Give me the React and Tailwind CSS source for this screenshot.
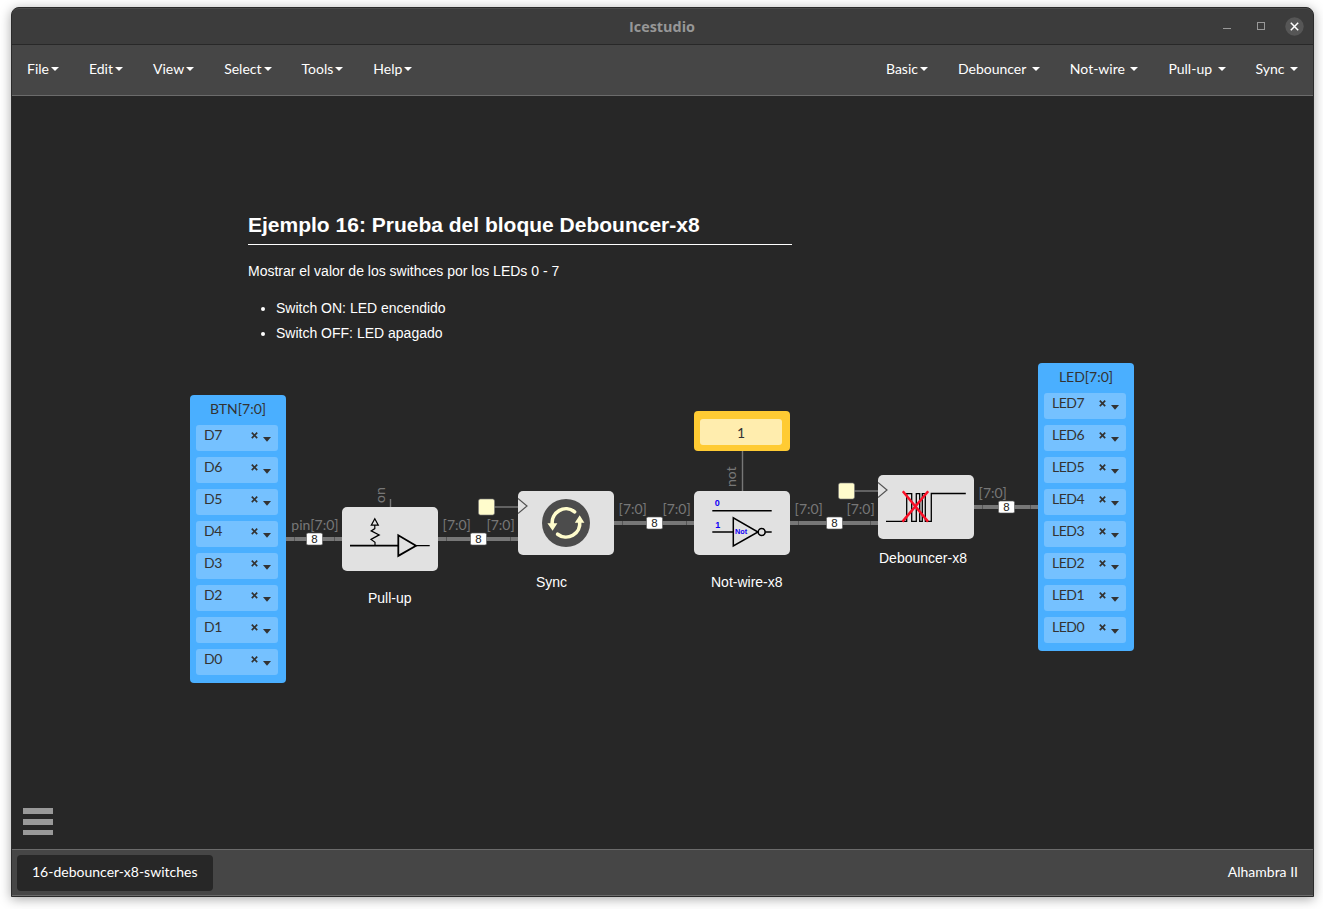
import React from "react";

const leftMenus = ["File", "Edit", "View", "Select", "Tools", "Help"];
const rightMenus = ["Basic", "Debouncer", "Not-wire", "Pull-up", "Sync"];

function Caret() {
  return <span className="mt-px h-0 w-0 border-x-4 border-t-4 border-x-transparent border-t-white" />;
}

function TitleBar() {
  return (
    <div className="grid h-[37px] grid-cols-[1fr_auto_1fr] items-center rounded-t-[7px] border-t border-b border-t-[#4b4b4b] border-b-[#282828] bg-[#3c3c3c]">
      <span />
      <span className="pr-px font-['Open_Sans',sans-serif] text-[14.4px] leading-5 font-bold text-[#979797]">Icestudio</span>
      <div className="flex items-center justify-end pr-[9px] pb-px">
        <svg width="8" height="8" className="mr-[26px]">
          <path d="M0 6.5H8" stroke="#999" />
        </svg>
        <svg width="8" height="8" className="mr-[20px]">
          <rect x=".5" y=".5" width="7" height="7" fill="none" stroke="#999" />
        </svg>
        <svg width="19" height="19">
          <circle cx="9.5" cy="9.5" r="9.2" fill="#565656" />
          <path d="M5.8 5.8l7.4 7.4M13.2 5.8l-7.4 7.4" stroke="#fff" strokeWidth="1.5" />
        </svg>
      </div>
    </div>
  );
}

function MenuBar() {
  return (
    <nav className="flex h-[51px] items-center justify-between border-b border-[#6b6b6b] bg-[#464646] px-[15px] pb-[3px] text-[14px] leading-5 text-white">
      <div className="flex gap-[30px]">
        {leftMenus.map((m) => (
          <button key={m} className="flex items-center gap-[2px]">
            {m}
            <Caret />
          </button>
        ))}
      </div>
      <div className="flex gap-[30px]">
        {rightMenus.map((m, i) => (
          <button key={m} className={i === 0 ? "flex items-center gap-[2px]" : "flex items-center gap-[5.5px]"}>
            {m}
            <Caret />
          </button>
        ))}
      </div>
    </nav>
  );
}

function IoBlock({ title, pins, className }) {
  return (
    <div className={"absolute flex h-72 w-24 flex-col rounded-[4px] bg-[#4aafff] pl-1.5 text-[14px] text-[#333] " + className}>
      <div className="flex h-[30px] justify-center pr-1.5 leading-7">{title}</div>
      <div className="flex flex-col gap-1.5">
        {pins.map((p) => (
          <div key={p} className="flex h-[26px] w-[82px] rounded-[3px] bg-[#75c1ff] pl-2">
            <span className="flex-1 leading-[19px] tracking-[-0.5px]">{p}</span>
            <svg width="27" height="26" viewBox="0 0 27 26">
              <path d="M.8 7.7l5.4 5.4M6.2 7.7l-5.4 5.4" stroke="#333" strokeWidth="1.7" />
              <path d="M12 12h8l-4 4.8z" fill="#333" />
            </svg>
          </div>
        ))}
      </div>
    </div>
  );
}

function Bus({ x1, x2, y, notches }) {
  return (
    <g>
      <rect x={x1} y={y - 2} width={x2 - x1} height="4" fill="#777" />
      {notches.map((n) => (
        <rect key={n} x={n} y={y - 2} width="1" height="4" fill="#555" />
      ))}
    </g>
  );
}

function Width({ x, y }) {
  return (
    <g>
      <rect x={x - 8} y={y - 6} width="16" height="12" rx="1.5" fill="#fff" stroke="#555" strokeWidth=".6" />
      <text x={x} y={y + 4} textAnchor="middle" fontSize="11.5" fill="#222" fontFamily="Liberation Sans, sans-serif">8</text>
    </g>
  );
}

function Wires() {
  return (
    <svg className="absolute inset-0" width="1302" height="753" viewBox="12 96 1302 753">
      <Bus x1={286} x2={342} y={539} notches={[294, 334]} />
      <Bus x1={438} x2={518} y={539} notches={[446, 510]} />
      <Bus x1={614} x2={694} y={523} notches={[622, 686]} />
      <Bus x1={790} x2={878} y={523} notches={[798, 870]} />
      <Bus x1={974} x2={1038} y={507} notches={[982, 1030]} />
      <g stroke="#777" strokeWidth="1.4">
        <path d="M494 507H518M854 491H878M742.5 451V491M390.5 499V507" />
      </g>
      <g fill="#777" fontSize="14" fontFamily="Lato, sans-serif">
        <text x="291.3" y="530">pin[7:0]</text>
        <text x="442.6" y="530">[7:0]</text>
        <text x="486.4" y="530">[7:0]</text>
        <text x="618.6" y="514">[7:0]</text>
        <text x="662.4" y="514">[7:0]</text>
        <text x="794.6" y="514">[7:0]</text>
        <text x="846.4" y="514">[7:0]</text>
        <text x="978.6" y="498">[7:0]</text>
        <text transform="translate(385 503) rotate(-90)">on</text>
        <text transform="translate(736 487) rotate(-90)">not</text>
      </g>
      <Width x={314.5} y={539} />
      <Width x={478.5} y={539} />
      <Width x={654.5} y={523} />
      <Width x={834.5} y={523} />
      <Width x={1006.5} y={507} />
      <g fill="#fffccc" stroke="#777" strokeWidth=".6">
        <rect x="478.5" y="499" width="16" height="16" rx="2" />
        <rect x="838.5" y="483" width="16" height="16" rx="2" />
      </g>
    </svg>
  );
}

function Block({ className, children }) {
  return <div className={"absolute h-16 w-24 overflow-hidden rounded-[5px] bg-[#e1e1e1] " + className}>{children}</div>;
}

function Label({ className, children }) {
  return <div className={"absolute font-['Liberation_Sans',Arial,sans-serif] text-[14px] leading-5 whitespace-nowrap text-white " + className}>{children}</div>;
}

function Canvas() {
  return (
    <main className="relative h-[753px] overflow-hidden bg-[#272727]">
      <section className="absolute top-[114px] left-[236px] w-[544px] font-['Liberation_Sans',Arial,sans-serif] text-[14px] leading-[25px] text-white">
        <h1 className="h-[35px] border-b border-white text-[21px] leading-[30px] font-bold">Ejemplo 16: Prueba del bloque Debouncer-x8</h1>
        <p className="mt-[14px]">Mostrar el valor de los swithces por los LEDs 0 - 7</p>
        <ul className="mt-3 list-disc pl-7">
          <li>Switch ON: LED encendido</li>
          <li>Switch OFF: LED apagado</li>
        </ul>
      </section>

      <Wires />

      <IoBlock className="top-[299px] left-[178px]" title="BTN[7:0]" pins={["D7", "D6", "D5", "D4", "D3", "D2", "D1", "D0"]} />

      <Block className="top-[411px] left-[330px]">
        <svg width="96" height="64" viewBox="342 507 96 64" fill="none" stroke="#000">
          <path d="M350 545.7H398" strokeWidth="1.8" />
          <path d="M416 545.7H429.7" strokeWidth="1.2" />
          <path d="M398.3 535.3V555.9L416 545.7Z" strokeWidth="1.8" />
          <path d="M375 545.5V542.2L371 539.4L379.2 534.9L371.2 530.9L374.8 528.6V525.2M374.8 518.8L371.3 525.2H378.3Z" strokeWidth="1.2" />
        </svg>
      </Block>
      <Label className="top-[492px] left-[356px]">Pull-up</Label>

      <Block className="top-[395px] left-[506px]">
        <svg width="96" height="64" viewBox="518 491 96 64" fill="none">
          <path d="M518 498.5L527 506L518 513.5" stroke="#555" strokeWidth="1.2" />
          <circle cx="566" cy="523" r="24" fill="#4c4c4c" />
          <g stroke="#fffccc" strokeWidth="3.6">
            <path d="M574.6 511.8A13.8 13.8 0 0 0 552.3 524.5" strokeLinecap="round" />
            <path d="M557.6 534.2A13.8 13.8 0 0 0 579.7 521.5" strokeLinecap="round" />
          </g>
          <path d="M547.4 523.2H557.4L552.6 530.8ZM574.8 522.8H584.4L579.7 515.3Z" fill="#fffccc" />
        </svg>
      </Block>
      <Label className="top-[476px] left-[524px]">Sync</Label>

      <div className="absolute top-[315px] left-[682px] h-10 w-24 rounded-[4px] bg-[#ffcb33] pt-2 pl-1.5">
        <div className="h-[26px] w-[82px] rounded-[3px] bg-[#ffedae] text-center text-[14px] leading-[27px] text-[#333]">1</div>
      </div>

      <Block className="top-[395px] left-[682px]">
        <svg width="96" height="64" viewBox="694 491 96 64" fill="none" stroke="#000" strokeWidth="1.5">
          <path d="M712.3 510.7H771.7M712.3 532H733M765.3 532H771.7" />
          <path d="M733.3 517.8V546L758 532Z" />
          <circle cx="761.7" cy="532" r="3.5" />
          <g fill="#1000f5" stroke="none" fontFamily="Liberation Sans, sans-serif" fontWeight="bold">
            <text x="714.8" y="506" fontSize="9">0</text>
            <text x="715.2" y="528" fontSize="9">1</text>
            <text x="735" y="534" fontSize="7.3">Not</text>
          </g>
        </svg>
      </Block>
      <Label className="top-[476px] left-[699px]">Not-wire-x8</Label>

      <Block className="top-[379px] left-[866px]">
        <svg width="96" height="64" viewBox="878 475 96 64" fill="none">
          <path d="M878 482.5L887 490L878 497.5" stroke="#555" strokeWidth="1.2" />
          <path d="M886 521.3H906.7V493.7H911.7V521.3H916.3V493.7H919.7V521.3H922.3V493.7H925.3V521.3H931.3V493.5H965.8" stroke="#000" strokeWidth="1.3" />
          <path d="M902.8 491.2L928 521.6M928.2 491.2L902.5 521.6" stroke="#fa1027" strokeWidth="2.5" />
        </svg>
      </Block>
      <Label className="top-[452px] left-[867px]">Debouncer-x8</Label>

      <IoBlock className="top-[267px] left-[1026px]" title="LED[7:0]" pins={["LED7", "LED6", "LED5", "LED4", "LED3", "LED2", "LED1", "LED0"]} />

      <button className="absolute top-[712px] left-[11px] flex w-[30px] flex-col gap-[5px]">
        <span className="h-1.5 bg-[#999]" />
        <span className="h-1.5 bg-[#999]" />
        <span className="h-[5px] bg-[#999]" />
      </button>
    </main>
  );
}

export default function App() {
  return (
    <div className="h-[909px] w-[1323px] overflow-hidden bg-white pt-[7px] pl-[11px] font-['Lato',sans-serif]">
      <div className="h-[890px] w-[1303px] rounded-t-[8px] border border-[#2b2b2b] bg-[#272727] shadow-[0_2px_12px_rgba(0,0,0,0.35)]">
        <TitleBar />
        <MenuBar />
        <Canvas />
        <footer className="flex h-[47px] items-center justify-between border-t border-b border-[#6b6b6b] bg-[#464646] pr-[15px] pl-[5px] text-[14px] leading-5 text-white">
          <div className="mt-px flex h-9 w-[196px] items-center rounded-[4px] bg-[#272727] pb-[3px] pl-[15px]">16-debouncer-x8-switches</div>
          <div className="mb-px pb-px">Alhambra II</div>
        </footer>
      </div>
    </div>
  );
}
